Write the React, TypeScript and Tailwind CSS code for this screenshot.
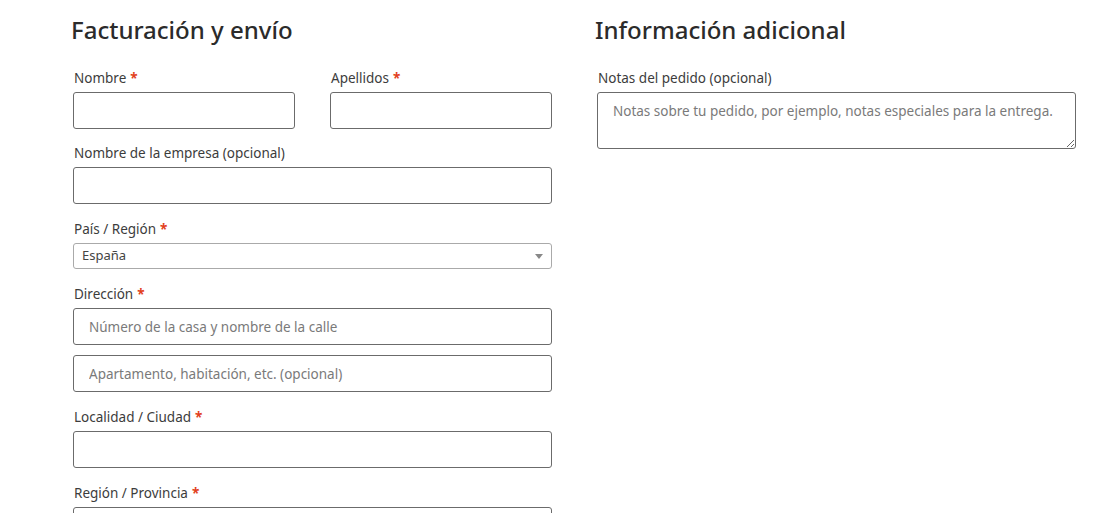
import React from 'react';

const font = { fontFamily: '"Noto Sans", "Open Sans", Arial, sans-serif' };

function Label({ text, required }: { text: string; required?: boolean }) {
  return (
    <label className="block text-[13.5px] leading-[20px] text-[#3c3c3c] mb-[4px] pl-[1px]">
      {text}
      {required && <span className="text-[#e2401c] font-bold ml-[4px]">*</span>}
    </label>
  );
}

const inputCls =
  'block w-full h-[37px] border border-[#6b6b6b] rounded-[3px] bg-white px-[15px] text-[13.5px] text-[#333] placeholder:text-[#7a7a7a] outline-none';

export default function App() {
  return (
    <div className="min-h-[513px] bg-white text-[#333]" style={font}>
      <div className="flex gap-[45px] pl-[73px] pt-[12px]">
        <div className="w-[479px]">
          <h3 className="text-[24px] leading-[36px] font-medium text-[#2b2b2b] -ml-[2px] mb-[20px]">
            Facturación y envío
          </h3>

          <div className="flex gap-[35px] mb-[14px]">
            <div className="flex-1">
              <Label text="Nombre" required />
              <input className={inputCls} />
            </div>
            <div className="flex-1">
              <Label text="Apellidos" required />
              <input className={inputCls} />
            </div>
          </div>

          <div className="mb-[15px]">
            <Label text="Nombre de la empresa (opcional)" />
            <input className={inputCls} />
          </div>

          <div className="mb-[15px]">
            <Label text="País / Región" required />
            <div className="relative h-[26px] border border-[#aaa] rounded-[3px] bg-white flex items-center pl-[8px] text-[13px] text-[#444]">
              España
              <span className="absolute right-[8px] top-[10px] w-0 h-0 border-l-[4px] border-r-[4px] border-t-[5px] border-l-transparent border-r-transparent border-t-[#888]" />
            </div>
          </div>

          <div className="mb-[15px]">
            <Label text="Dirección" required />
            <input className={inputCls} placeholder="Número de la casa y nombre de la calle" />
            <input className={`${inputCls} mt-[10px]`} placeholder="Apartamento, habitación, etc. (opcional)" />
          </div>

          <div className="mb-[15px]">
            <Label text="Localidad / Ciudad" required />
            <input className={inputCls} />
          </div>

          <div>
            <Label text="Región / Provincia" required />
            <input className={inputCls} />
          </div>
        </div>

        <div className="w-[479px]">
          <h3 className="text-[24px] leading-[36px] font-medium text-[#2b2b2b] -ml-[2px] mb-[20px]">
            Información adicional
          </h3>
          <Label text="Notas del pedido (opcional)" />
          <textarea
            className="block w-full h-[57px] border border-[#6b6b6b] rounded-[3px] bg-white pl-[15px] pr-[8px] pt-[8px] text-[13.5px] leading-[20px] text-[#333] placeholder:text-[#7a7a7a] outline-none"
            placeholder="Notas sobre tu pedido, por ejemplo, notas especiales para la entrega."
          />
        </div>
      </div>
    </div>
  );
}
